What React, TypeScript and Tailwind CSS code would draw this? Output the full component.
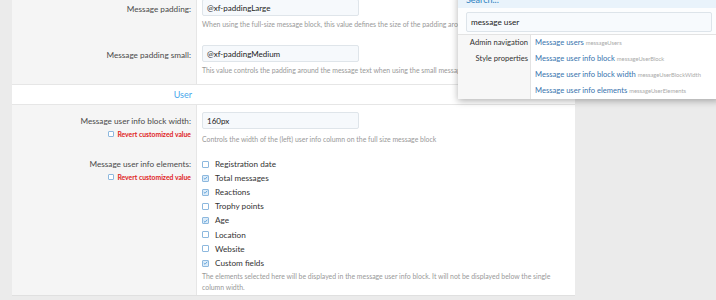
import { useState } from "react";

const elements = [
  { label: "Registration date", checked: false },
  { label: "Total messages", checked: true },
  { label: "Reactions", checked: true },
  { label: "Trophy points", checked: false },
  { label: "Age", checked: true },
  { label: "Location", checked: false },
  { label: "Website", checked: false },
  { label: "Custom fields", checked: true },
];

const styleResults = [
  { title: "Message user info block", key: "messageUserBlock" },
  { title: "Message user info block width", key: "messageUserBlockWidth" },
  { title: "Message user info elements", key: "messageUserElements" },
];

function Box({ checked, size = 7 }: { checked: boolean; size?: number }) {
  return (
    <span
      className={`inline-flex shrink-0 items-center justify-center rounded-[1px] border border-[#8db8de] ${checked ? "bg-[#dcecf9]" : "bg-white"}`}
      style={{ width: size, height: size }}
    >
      {checked && (
        <svg viewBox="0 0 8 8" className="h-[6px] w-[6px]">
          <path d="M1.3 4.2 L3.2 6 L6.8 2" fill="none" stroke="#3f8fd2" strokeWidth="1.2" />
        </svg>
      )}
    </span>
  );
}

function Input({ value }: { value: string }) {
  return (
    <div className="flex h-[17px] w-[157px] items-center rounded-[2px] border border-[#dfe5ea] bg-[#f6f9fc] px-[4px] text-[8px] text-[#222]">
      {value}
    </div>
  );
}

function Revert() {
  return (
    <div className="mt-[3px] flex items-center justify-end gap-[3px] text-[6.8px] font-bold leading-[10px] text-[#e02424]">
      <Box checked={false} size={6} />
      Revert customized value
    </div>
  );
}

export default function App() {
  const [elems] = useState(elements);

  return (
    <div className="relative h-[300px] w-[716px] overflow-hidden bg-[#ebebeb] font-['Lato','Liberation_Sans',sans-serif] text-[#4a4a4a]">
      <div className="ml-[12px] w-[563px] bg-white">
        {/* padding group */}
        <div className="flex h-[84px]">
          <div className="w-[185px] border-r border-[#e6e6e6] bg-[#f5f5f5] pr-[5px] text-right text-[8.2px] leading-[10px]">
            <div className="pt-[4px]">Message padding:</div>
            <div className="mt-[36px]">Message padding small:</div>
          </div>
          <div className="flex-1 pl-[5px]">
            <div className="-mt-[1px]">
              <Input value="@xf-paddingLarge" />
            </div>
            <div className="mt-[3px] whitespace-nowrap text-[6.9px] leading-[10px] text-[#999]">
              When using the full-size message block, this value defines the size of the padding around the message text.
            </div>
            <div className="mt-[16px]">
              <Input value="@xf-paddingMedium" />
            </div>
            <div className="mt-[3px] whitespace-nowrap text-[6.9px] leading-[10px] text-[#999]">
              This value controls the padding around the message text when using the small message block.
            </div>
          </div>
        </div>

        {/* header */}
        <div className="flex h-[21px] items-center border-y border-[#e6e6e6] bg-white">
          <div className="w-[185px] pr-[5px] text-right text-[9px] text-[#47a7eb]">User</div>
        </div>

        {/* user group */}
        <div className="flex h-[191px] border-b border-[#e0e0e0]">
          <div className="w-[185px] border-r border-[#e6e6e6] bg-[#f5f5f5] pr-[5px] text-right text-[8.2px] leading-[10px]">
            <div className="pt-[11px]">Message user info block width:</div>
            <Revert />
            <div className="mt-[20px]">Message user info elements:</div>
            <Revert />
          </div>
          <div className="flex-1 pl-[5px]">
            <div className="pt-[7px]">
              <Input value="160px" />
            </div>
            <div className="mt-[5px] whitespace-nowrap text-[6.9px] leading-[10px] text-[#999]">
              Controls the width of the (left) user info column on the full size message block
            </div>
            <div className="mt-[13px]">
              {elems.map((e) => (
                <div key={e.label} className="flex h-[14.15px] items-center gap-[6px] text-[8.2px] text-[#333]">
                  <Box checked={e.checked} />
                  {e.label}
                </div>
              ))}
            </div>
            <div className="mt-[1px] w-[362px] text-[6.9px] leading-[11px] text-[#999]">
              The elements selected here will be displayed in the message user info block. It will not be displayed below the single column width.
            </div>
          </div>
        </div>
      </div>

      {/* search popup */}
      <div className="absolute left-[458px] top-[-8px] w-[262px] bg-white shadow-[0_2px_7px_rgba(0,0,0,0.3)]">
        <div className="flex h-[16px] items-center bg-[#e9f3fb] px-[8px] text-[9px] text-[#2b7fc0]">Search...</div>
        <div className="bg-[#fcfdfe] px-[8px] pb-[2px] pt-[4px]">
          <div className="flex h-[20px] items-center rounded-[2px] border border-[#dde4ea] bg-[#f7fafd] px-[4px] text-[8.2px] text-[#222]">
            message user
          </div>
        </div>
        <div className="flex border-t border-[#e3e3e3] text-[7.6px]">
          <div className="w-[73px] border-r border-[#e3e3e3] bg-[#f7f7f7] pr-[2px] text-right text-[#333]">
            <div className="flex h-[16px] items-center justify-end">Admin navigation</div>
            <div className="flex h-[16px] items-center justify-end">Style properties</div>
            <div className="h-[32px]" />
          </div>
          <div className="flex-1 pl-[4px] text-[#3774ae]">
            <div className="flex h-[16px] items-center gap-[2px] whitespace-nowrap">
              Message users <span className="text-[5.8px] text-[#aaa]">messageUsers</span>
            </div>
            {styleResults.map((r) => (
              <div key={r.key} className="flex h-[16px] items-center gap-[2px] whitespace-nowrap">
                {r.title} <span className="text-[5.8px] text-[#aaa]">{r.key}</span>
              </div>
            ))}
          </div>
        </div>
      </div>
    </div>
  );
}
